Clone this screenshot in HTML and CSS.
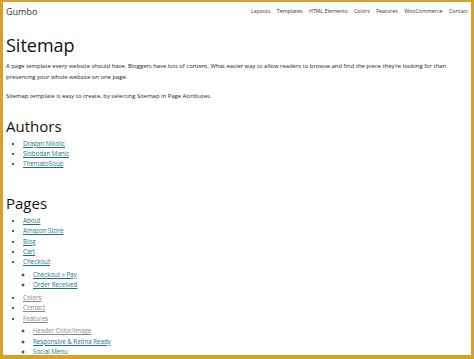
FILE: index.html
```html
<!DOCTYPE html>
<html lang="en">
<head>
    <meta charset="UTF-8">
    <title>Sitemap - Gumbo</title>
    <link rel="stylesheet" href="styles.css">
</head>
<body>
    <div class="frame">
        <div class="header">
            <div class="logo">Gumbo</div>
            <ul class="nav">
                <li>Layouts</li>
                <li>Templates</li>
                <li>HTML Elements</li>
                <li>Colors</li>
                <li>Features</li>
                <li>WooCommerce</li>
                <li>Contact</li>
            </ul>
        </div>
        <div class="content">
            <h1>Sitemap</h1>
            <p>A page template every website should have. Bloggers have lots of content. What easier way to allow readers to browse and find the piece they&rsquo;re looking for than presenting your whole website on one page.</p>
            <p>Sitemap template is easy to create, by selecting Sitemap in Page Attributes.</p>
            <h2 class="authors">Authors</h2>
            <ul class="links">
                <li><a href="#">Dragan Nikolic</a></li>
                <li><a href="#">Slobodan Manic</a></li>
                <li><a href="#">ThematoSoup</a></li>
            </ul>
            <h2 class="pages">Pages</h2>
            <ul class="links page-list">
                <li><a href="#">About</a></li>
                <li><a href="#">Amazon Store</a></li>
                <li><a href="#">Blog</a></li>
                <li><a href="#">Cart</a></li>
                <li><a href="#">Checkout</a>
                    <ul class="links sub">
                        <li><a href="#">Checkout &raquo; Pay</a></li>
                        <li><a href="#">Order Received</a></li>
                    </ul>
                </li>
                <li><a class="seen" href="#">Colors</a></li>
                <li><a class="seen" href="#">Contact</a></li>
                <li><a class="seen" href="#">Features</a>
                    <ul class="links sub">
                        <li><a class="seen" href="#">Header Color/Image</a></li>
                        <li><a href="#">Responsive &amp; Retina Ready</a></li>
                        <li><a href="#">Social Menu</a></li>
                    </ul>
                </li>
            </ul>
        </div>
    </div>
</body>
</html>
```

FILE: styles.css
```css
html, body {
    margin: 0;
    padding: 0;
}
body {
    font-family: "Open Sans", "Noto Sans", sans-serif;
    color: #222;
    background: #fff;
}
.frame {
    box-sizing: border-box;
    height: 359px;
    overflow: hidden;
    border-style: solid;
    border-color: #d6a228;
    border-width: 2px 3px 4px 3px;
    padding: 0 3px;
}
.header {
    display: flex;
    justify-content: space-between;
    align-items: center;
    height: 18px;
}
.logo {
    font-size: 9px;
    color: #333;
}
.nav {
    display: flex;
    gap: 6.5px;
    margin: 0;
    padding: 0;
    list-style: none;
    font-size: 5.3px;
    color: #333;
}
.content h1 {
    margin: 13px 0 0;
    font-size: 18px;
    font-weight: normal;
    line-height: 24px;
    color: #111;
}
.content p {
    margin: 4px 0 0;
    font-size: 5.9px;
    line-height: 11px;
}
.content p + p {
    margin-top: 8px;
}
.content h2 {
    margin: 0;
    font-size: 15px;
    font-weight: normal;
    line-height: 20px;
    color: #111;
}
.content h2.authors {
    margin-top: 14px;
}
.content h2.pages {
    margin-top: 23px;
}
.links {
    margin: 2.5px 0 0;
    padding-left: 17px;
    font-size: 6.2px;
    line-height: 10.4px;
}
.links.page-list {
    margin-top: 3px;
}
.links.sub {
    margin: 2px 0 2.5px;
    padding-left: 10px;
}
.links a {
    color: #1b7389;
}
.links a.seen {
    color: #888;
}
```
